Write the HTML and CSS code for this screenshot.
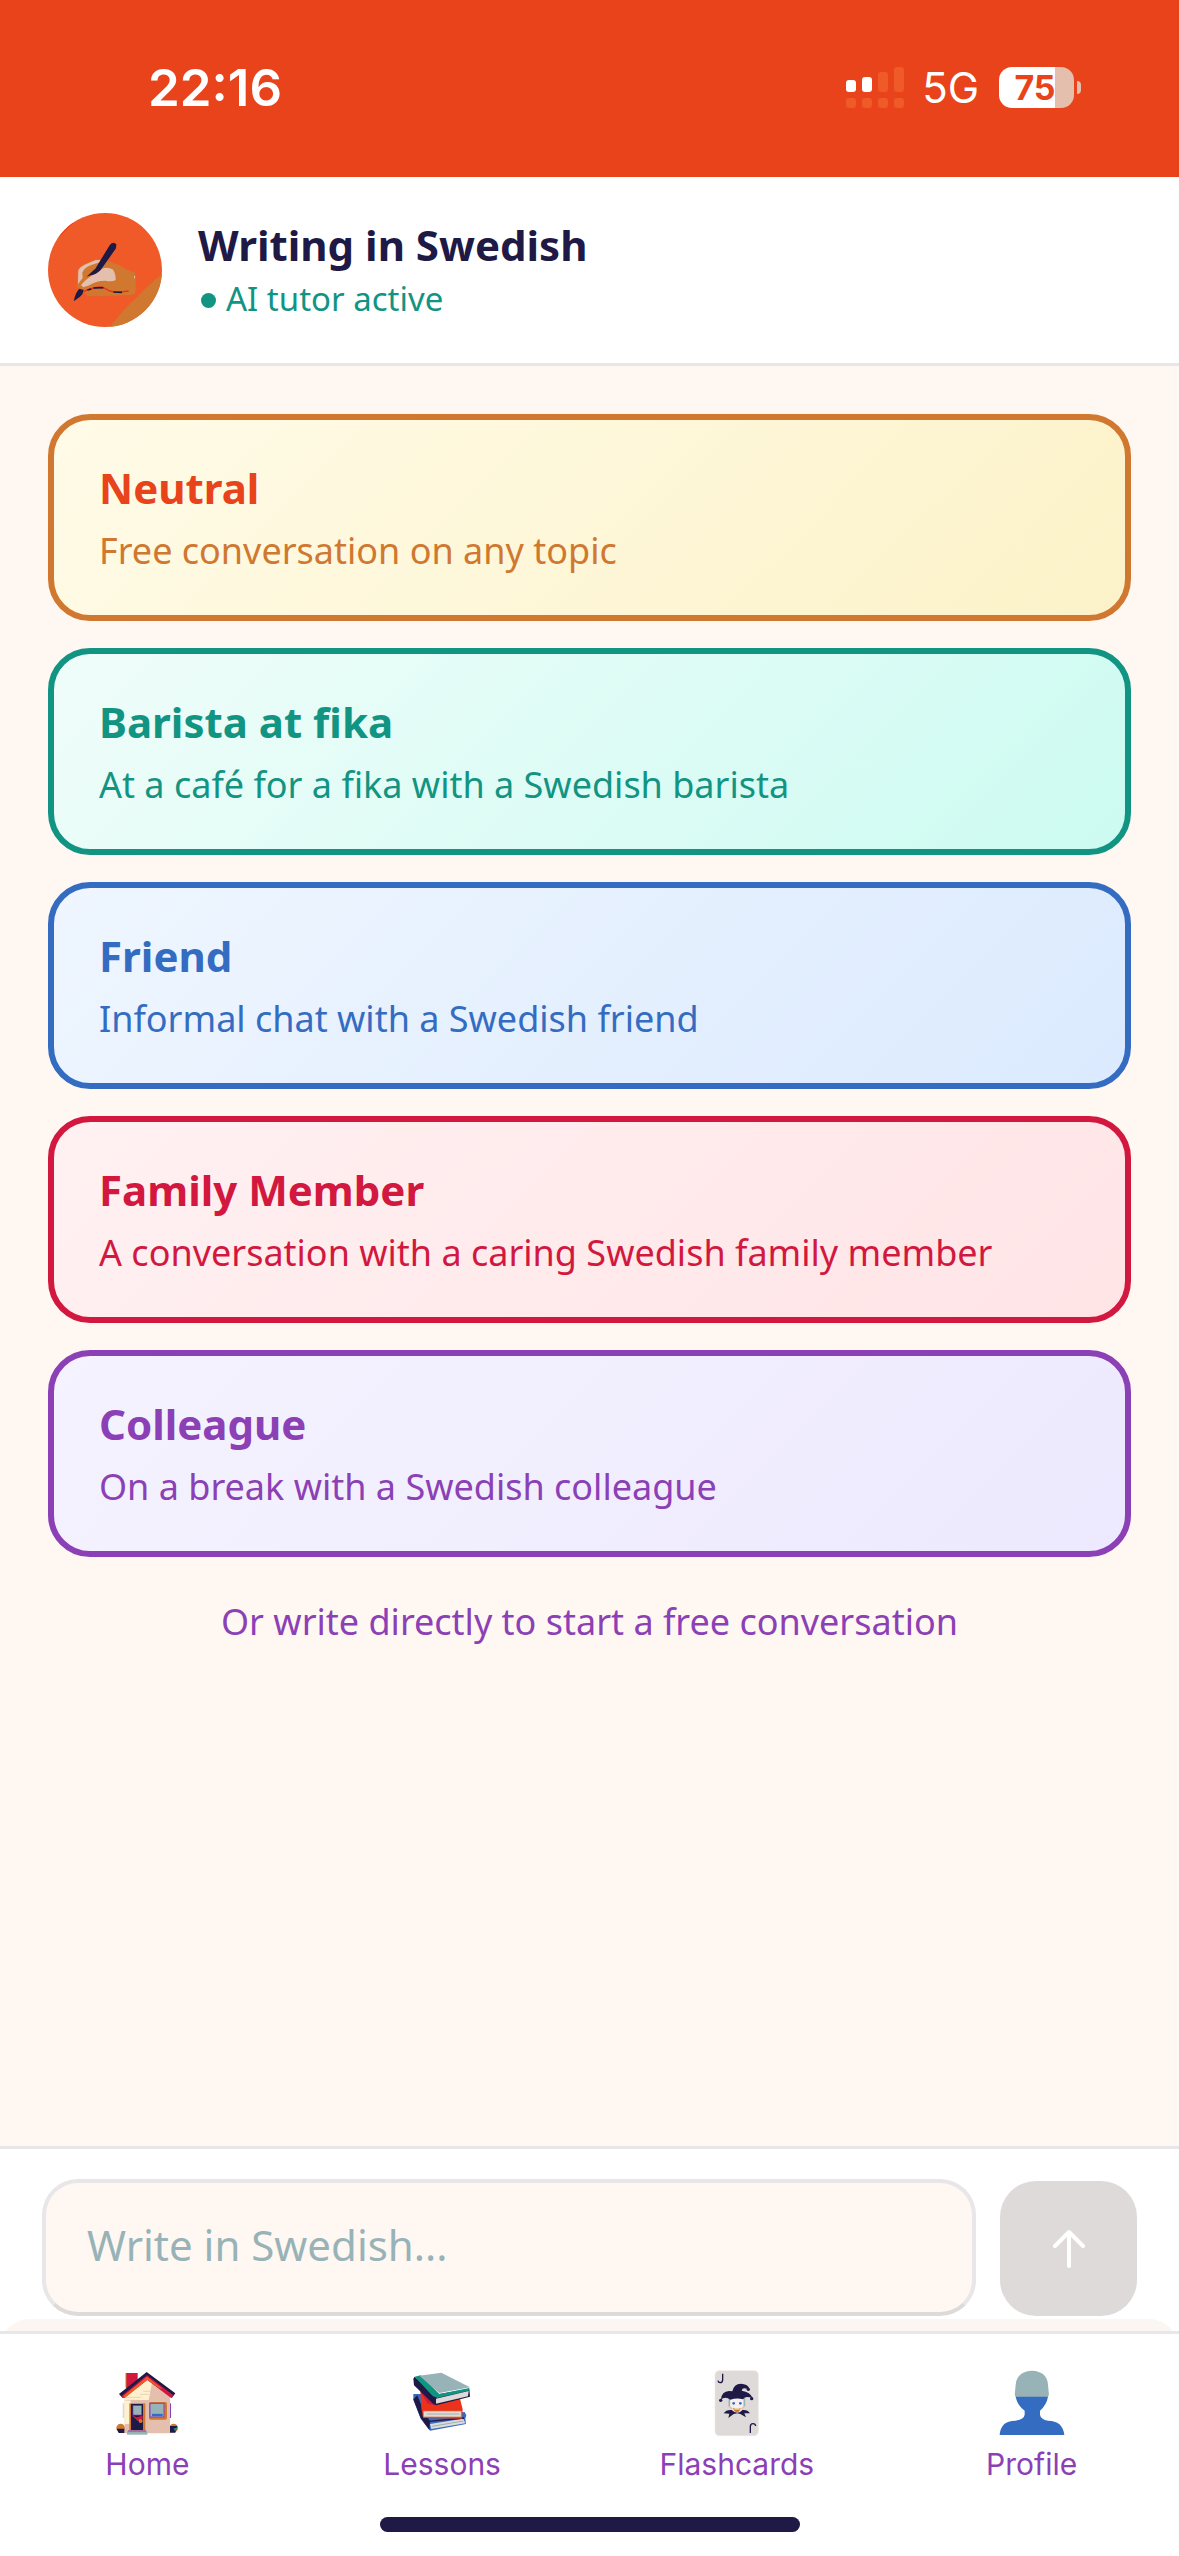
FILE: index.html
```html
<!DOCTYPE html>
<html lang="en">
<head>
<meta charset="UTF-8" />
<meta name="viewport" content="width=device-width, initial-scale=1" />
<title>Writing in Swedish</title>
<link rel="stylesheet" href="styles.css">
</head>
<body>

<div class="status-bar">
  <span class="time">22:16</span>
  <div class="status-icons">
    <svg class="signal" viewBox="0 0 58 41" aria-hidden="true">
      <g fill="#ffffff">
        <rect x="0" y="13" width="10" height="12" rx="3" />
        <rect x="16" y="10" width="10" height="15" rx="3" />
      </g>
      <g fill="#f05a28">
        <rect x="32" y="5" width="10" height="20" rx="3" />
        <rect x="48" y="0" width="10" height="25" rx="3" />
        <rect x="0" y="31" width="10" height="10" rx="3" />
        <rect x="16" y="31" width="10" height="10" rx="3" />
        <rect x="32" y="31" width="10" height="10" rx="3" />
        <rect x="48" y="31" width="10" height="10" rx="3" />
      </g>
    </svg>
    <span class="network">5G</span>
    <span class="battery">75</span>
  </div>
</div>

<header class="chat-header">
  <svg class="avatar" viewBox="54 69 342 342" aria-hidden="true">
    <defs>
      <clipPath id="avatarClip"><circle cx="225" cy="240" r="171" /></clipPath>
    </defs>
    <g clip-path="url(#avatarClip)">
      <rect x="54" y="69" width="342" height="342" fill="#f05a28" />
      <path d="M80 148 L130 100 L110 90 L70 130 Z" fill="#e8431a" />
      <path d="M396 252 Q350 290 322 320 Q280 358 240 411 H396 Z" fill="#d07830" />
    </g>
    <!-- hand -->
    <path d="M140 290 L142 250 Q144 234 158 226 L190 210 Q212 202 236 214 L270 226 Q296 244 314 247 L317 258 V300 Q316 314 304 315 L226 317 Q214 320 200 317 L176 318 Q164 312 162 302 L150 298 Z" fill="#d07830" />
    <path d="M144 282 L145 240 Q150 230 164 224 L196 211 L209 210 L212 216 L186 224 Q162 232 157 248 L158 264 Z" fill="#e5bfad" />
    <path d="M153 286 Q166 268 190 254 L216 236 Q232 230 248 238 Q258 252 257 270 Q246 276 226 272 Q196 272 178 286 L160 292 Z" fill="#e5bfad" />
    <rect x="312" y="258" width="3" height="7" fill="#e5bfad" />
    <path d="M162 304 L180 297 L206 291 L222 294 L240 303 L262 307 L296 303" fill="none" stroke="#e8321a" stroke-width="4" />
    <path d="M172 300 L184 297 M190 294 L220 293 M250 306 L276 307" fill="none" stroke="#1f1945" stroke-width="5" />
    <!-- pen -->
    <path d="M170 260 Q184 246 196 236 L240 164 Q250 153 259 163 L258 175 L212 240 Q198 254 182 256 Z" fill="#1f1945" />
    <path d="M131 334 Q136 308 148 296 L161 300 Q160 312 150 320 Z" fill="#1f1945" />
  </svg>
  <div class="header-text">
    <h1>Writing in Swedish</h1>
    <p><span class="dot"></span>AI tutor active</p>
  </div>
</header>

<main>
  <button type="button" class="card neutral">
    <span class="card-title">Neutral</span>
    <span class="card-desc">Free conversation on any topic</span>
  </button>
  <button type="button" class="card barista">
    <span class="card-title">Barista at fika</span>
    <span class="card-desc">At a café for a fika with a Swedish barista</span>
  </button>
  <button type="button" class="card friend">
    <span class="card-title">Friend</span>
    <span class="card-desc">Informal chat with a Swedish friend</span>
  </button>
  <button type="button" class="card family">
    <span class="card-title">Family Member</span>
    <span class="card-desc">A conversation with a caring Swedish family member</span>
  </button>
  <button type="button" class="card colleague">
    <span class="card-title">Colleague</span>
    <span class="card-desc">On a break with a Swedish colleague</span>
  </button>
  <p class="hint">Or write directly to start a free conversation</p>
</main>

<form class="composer">
  <input type="text" placeholder="Write in Swedish..." aria-label="Write in Swedish">
  <button type="button" class="send" aria-label="Send">
    <svg viewBox="0 0 32 40" aria-hidden="true">
      <path d="M16 37 V3 M2 17 L16 3 L30 17" fill="none" stroke="#ffffff" stroke-width="4" stroke-linecap="round" stroke-linejoin="round" />
    </svg>
  </button>
</form>

<div class="nav-edge"></div>

<nav class="tab-bar">
  <div class="tabs">
    <a href="#home">
      <svg viewBox="63 54 216 216" aria-hidden="true">
        <rect x="108" y="69" width="35" height="45" fill="#d2183f" />
        <path d="M108 69 V112" stroke="#d07830" stroke-width="3" />
        <circle cx="92" cy="234" r="13" fill="#d07830" />
        <circle cx="251" cy="234" r="13" fill="#d07830" />
        <path d="M80 236 H104 V249 H86 Z M239 228 H262 L256 248 H239 Z" fill="#1f1945" />
        <path d="M250 236 L263 232 L256 244 Z" fill="#129483" />
        <rect x="98" y="160" width="5" height="44" fill="#dedad9" />
        <rect x="238" y="160" width="5" height="44" fill="#8b40b5" />
        <path d="M104 250 V138 L172 84 L240 138 V250 Z" fill="#e5bfad" />
        <path d="M104 222 V138 L172 84 L186 98 L176 150 H122 V222 Z" fill="#fdf2cd" />
        <path d="M106 142 H154 M106 151 H146 M150 133 H176 M160 124 H184" stroke="#e5bfad" stroke-width="2" />
        <path d="M87 132 L170 66 L256 130 L246 143 L172 88 L98 144 Z" fill="#1f1945" />
        <path d="M94 139 L171 76 L250 136 L244 145 L172 90 L102 145 Z" fill="#d2183f" />
        <path d="M100 138 L171 80 L218 116 L206 114 L172 89 L105 143 Z" fill="#f05a28" />
        <rect x="118" y="160" width="48" height="82" fill="#d07830" />
        <rect x="123" y="162" width="36" height="78" fill="#1f1945" />
        <path d="M124 195 L140 202 L158 197 V206 L144 214 Z" fill="#d2183f" />
        <rect x="129" y="167" width="26" height="28" fill="#98b3b7" stroke="#8b40b5" stroke-width="2" />
        <circle cx="152" cy="213" r="6" fill="#d07830" />
        <rect x="111" y="242" width="61" height="12" fill="#98b3b7" />
        <path d="M114 243 H168" stroke="#8b40b5" stroke-width="3" />
        <rect x="177" y="156" width="54" height="53" rx="5" fill="#d07830" />
        <rect x="180" y="160" width="42" height="41" fill="#98b3b7" stroke="#8b40b5" stroke-width="3" />
        <path d="M186 195 H218" stroke="#346cc2" stroke-width="7" />
      </svg>
      <span>Home</span>
    </a>
    <a href="#lessons">
      <svg viewBox="78 54 216 216" aria-hidden="true">
        <!-- blue book -->
        <path d="M100 132 L124 132 L150 196 L254 186 L259 196 L256 206 L258 222 L150 242 L122 206 L100 150 Z" fill="#346cc2" />
        <path d="M100 148 L112 136 L132 186 L150 214 L148 240 L122 204 Z" fill="#1f1945" />
        <path d="M150 222 L250 206 L256 220 L154 237 Z" fill="#dedad9" />
        <path d="M156 229 L250 213" stroke="#98b3b7" stroke-width="3" />
        <path d="M146 214 L252 204" stroke="#1f1945" stroke-width="4" />
        <!-- red book -->
        <path d="M121 124 L166 150 L240 146 L248 178 L246 206 L130 204 L124 176 Z" fill="#ea321c" />
        <path d="M121 124 L170 140 V166 L142 160 Z" fill="#d2183f" />
        <path d="M130 183 H244 V201 H130 Z" fill="#e5d9d5" stroke="#d07830" stroke-width="2" />
        <path d="M140 192 H238" stroke="#98b3b7" stroke-width="3" />
        <!-- green book -->
        <path d="M100 86 L104 80 L166 134 L268 116 L270 140 L168 166 L160 162 L102 106 Z" fill="#1f1945" />
        <path d="M104 80 L122 76 L178 132 L268 114 L266 122 L172 144 L158 138 Z" fill="#129483" />
        <path d="M118 77 L184 68 L270 112 L178 129 Z" fill="#98b3b7" />
        <path d="M168 146 L266 123 L264 139 L168 161 Z" fill="#dedad9" />
      </svg>
      <span>Lessons</span>
    </a>
    <a href="#flashcards">
      <svg viewBox="122 54 216 216" aria-hidden="true">
        <rect x="164" y="62" width="130" height="195" rx="13" fill="#dedad9" stroke="#f3e6df" stroke-width="2" />
        <path d="M187 71 V89 Q187 98 179 98 Q174 98 173 92" fill="none" stroke="#1f1945" stroke-width="4" />
        <path d="M270 249 V230 Q270 221 278 221 Q285 221 286 228" fill="none" stroke="#1f1945" stroke-width="4" />
        <path d="M205 140 H254 V166 Q248 186 230 190 Q212 184 206 166 Z" fill="#f6efec" />
        <path d="M207 142 V170 M252 142 V170" stroke="#98b3b7" stroke-width="5" />
        <path d="M206 168 L216 178 M253 168 L244 178" stroke="#e5bfad" stroke-width="5" />
        <!-- hat -->
        <path d="M182 148 Q184 124 206 123 L216 124 Q220 102 242 101 Q262 102 266 114 L258 116 Q246 112 244 122 Q270 126 277 144 L268 142 Q254 138 248 148 Q230 142 210 149 Q196 138 182 148 Z" fill="#1f1945" />
        <circle cx="181" cy="151" r="5" fill="#1f1945" />
        <circle cx="264" cy="118" r="5" fill="#1f1945" />
        <circle cx="274" cy="146" r="5" fill="#1f1945" />
        <!-- face -->
        <circle cx="220" cy="160" r="4" fill="#346cc2" />
        <circle cx="240" cy="160" r="4" fill="#346cc2" />
        <path d="M218 173 Q230 178 241 173 Q239 186 230 187 Q221 186 218 173 Z" fill="#d07830" />
        <path d="M222 177 H238" stroke="#fdf2cd" stroke-width="3" />
        <!-- collar -->
        <path d="M190 190 Q198 178 214 180 Q222 188 231 188 Q240 188 246 180 Q262 178 269 190 L252 190 L257 202 L240 192 L231 190 L220 192 L204 204 L207 191 Z" fill="#1f1945" />
      </svg>
      <span>Flashcards</span>
    </a>
    <a href="#profile">
      <svg viewBox="76 54 216 216" aria-hidden="true">
        <path d="M135 141 Q131 134 133 126 L135 104 Q139 64 184 62 Q229 64 232 104 L234 126 Q236 134 232 141 Z" fill="#98b3b7" />
        <path d="M135 140 H232 Q228 164 208 182 V194 Q210 208 232 212 Q276 212 281 255 H87 Q90 212 134 212 Q160 208 162 194 V182 Q140 166 135 140 Z" fill="#346cc2" />
      </svg>
      <span>Profile</span>
    </a>
  </div>
  <div class="home-indicator"></div>
</nav>

</body>
</html>
```
FILE: styles.css
```css
* {
  box-sizing: border-box;
}

body {
  margin: 0;
  min-height: 100vh;
  display: flex;
  flex-direction: column;
  background: #fff7f2;
  font-family: "Noto Sans", sans-serif;
  color: #1f1945;
}

h1, p {
  margin: 0;
}

/* status bar */
.status-bar {
  height: 177px;
  padding: 0 98px 2px 148px;
  display: flex;
  align-items: center;
  justify-content: space-between;
  background: #e8431a;
  color: #ffffff;
  font-family: Inter, sans-serif;
}

.time {
  font-size: 51px;
  font-weight: 600;
}

.status-icons {
  display: flex;
  align-items: center;
}

.signal {
  width: 58px;
  height: 41px;
}

.network {
  margin: 0 20px 0 18px;
  font-size: 42px;
}

.battery {
  position: relative;
  width: 75px;
  height: 41px;
  margin-right: 7px;
  padding-right: 3px;
  border-radius: 13px;
  background: linear-gradient(to right, #ffffff 56px, #e5bfad 56px);
  color: #e8431a;
  font-size: 34px;
  font-weight: 700;
  line-height: 41px;
  text-align: center;
}

.battery::after {
  content: "";
  position: absolute;
  top: 14px;
  right: -7px;
  width: 4px;
  height: 13px;
  border-radius: 0 4px 4px 0;
  background: #e5bfad;
}

/* header */
.chat-header {
  display: flex;
  align-items: center;
  gap: 36px;
  padding: 36px 48px;
  background: #ffffff;
  border-bottom: 3px solid #e8e6e8;
}

.avatar {
  width: 114px;
  height: 114px;
}

.header-text {
  display: flex;
  flex-direction: column;
  gap: 3px;
  padding-bottom: 3px;
}

.header-text h1 {
  font-size: 42px;
  line-height: 57px;
}

.header-text p {
  display: flex;
  align-items: center;
  gap: 10px;
  font-size: 33px;
  line-height: 45px;
  color: #129483;
}

.dot {
  width: 15px;
  height: 15px;
  margin: 4px 0 0 3px;
  border-radius: 50%;
  background: #129483;
}

/* scenario cards */
main {
  flex: 1;
  display: flex;
  flex-direction: column;
  gap: 27px;
  padding: 48px;
}

.card {
  display: flex;
  flex-direction: column;
  gap: 9px;
  padding: 39px 45px;
  border: 6px solid;
  border-radius: 42px;
  font-family: inherit;
  text-align: left;
}

.card-title {
  font-size: 42px;
  font-weight: 700;
  line-height: 57px;
}

.card-desc {
  font-size: 36px;
  line-height: 51px;
}

.neutral {
  border-color: #d07830;
  background: linear-gradient(135deg, #fffbe8, #fcf2c8) border-box;
  color: #d07830;
}

.neutral .card-title {
  color: #e8431a;
}

.barista {
  border-color: #129483;
  background: linear-gradient(135deg, #f0fdfa, #ccfbf1) border-box;
  color: #129483;
}

.friend {
  border-color: #346cc2;
  background: linear-gradient(135deg, #eff6ff, #dbeafe) border-box;
  color: #346cc2;
}

.family {
  border-color: #d2183f;
  background: linear-gradient(135deg, #fff1f2, #ffe4e6) border-box;
  color: #d2183f;
}

.colleague {
  border-color: #8b40b5;
  background: linear-gradient(135deg, #f5f3ff, #ede9fe) border-box;
  color: #8b40b5;
}

.hint {
  margin-top: 12px;
  font-size: 36px;
  line-height: 51px;
  text-align: center;
  color: #8b40b5;
}

/* message box */
.composer {
  display: flex;
  align-items: flex-end;
  gap: 24px;
  padding: 30px 42px 3px;
  background: #ffffff;
  border-top: 3px solid #e8e6e8;
}

.composer input {
  flex: 1;
  min-width: 0;
  height: 137px;
  padding: 0 41px 6px;
  border: 4px solid #e8e6e8;
  border-bottom-color: #dedad9;
  border-radius: 36px;
  background: #fff7f2;
  color: #1f1945;
  font-family: inherit;
  font-size: 42px;
}

.composer input::placeholder {
  color: #98b3b7;
  opacity: 1;
}

.send {
  display: flex;
  align-items: center;
  justify-content: center;
  width: 137px;
  height: 135px;
  padding: 0;
  border: 0;
  border-radius: 36px;
  background: #dedad9;
}

.send svg {
  width: 32px;
  height: 40px;
}

/* rounded edge that shows above the tab bar */
.nav-edge {
  height: 36px;
  margin-bottom: -24px;
  border-radius: 30px 30px 0 0;
  background: #fcf6f2;
  box-shadow: 0 0 0 30px #ffffff;
  clip-path: inset(0);
}

/* tab bar */
.tab-bar {
  position: relative;
  padding: 34px 0 24px;
  background: #ffffff;
  border-top: 3px solid #e8e6e8;
}

.tabs {
  display: grid;
  grid-template-columns: repeat(4, 1fr);
}

.tabs a {
  display: flex;
  flex-direction: column;
  align-items: center;
  gap: 6px;
  color: #8b40b5;
  font-family: Inter, sans-serif;
  font-size: 30px;
  line-height: 36px;
  text-decoration: none;
}

.tabs svg {
  width: 72px;
  height: 72px;
}

.home-indicator {
  width: 420px;
  height: 15px;
  margin: 35px auto 0;
  border-radius: 8px;
  background: #1f1945;
}
```
